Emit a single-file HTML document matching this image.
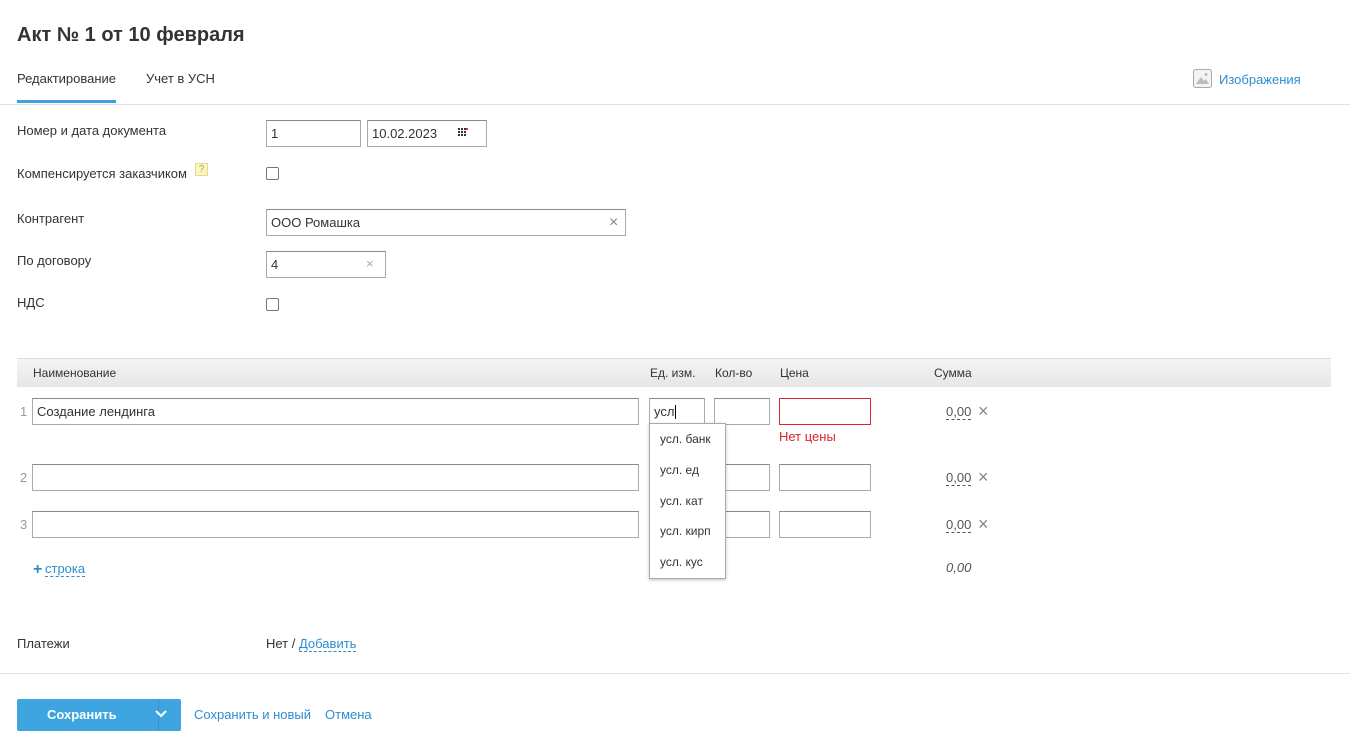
<!DOCTYPE html>
<html><head><meta charset="utf-8"><style>
*{box-sizing:border-box;margin:0;padding:0}
body{width:1350px;height:746px;background:#fff;font-family:"Liberation Sans",sans-serif;font-size:13px;color:#333;position:relative;overflow:hidden}
.a{position:absolute;white-space:nowrap}
.in{position:absolute;border:1px solid #a9a9a9;border-top-color:#8a8a8a;background:#fff;font-size:13px;padding:0 4px;display:flex;align-items:center}
.cb{position:absolute;width:13px;height:13px;border:1px solid #777;border-radius:2px;background:#fff}
.x{position:absolute;color:#888;font-size:16px;line-height:16px}
.sum{position:absolute;color:#555;border-bottom:1px dashed #555;line-height:14px;font-size:13px}
.lnk{color:#2d8ccf}
</style></head><body>
<div class="a" style="left:17px;top:24px;font-size:20px;font-weight:bold;color:#333">Акт № 1 от 10 февраля</div>
<div class="a" style="left:17px;top:71px;color:#333">Редактирование</div>
<div class="a" style="left:146px;top:71px;color:#333">Учет в УСН</div>
<div class="a" style="left:17px;top:100px;width:99px;height:3px;background:#3fa0dc"></div>
<div class="a" style="left:0;top:104px;width:1350px;height:1px;background:#e0e0e0"></div>
<svg class="a" style="left:1193px;top:69px" width="19" height="19" viewBox="0 0 19 19"><rect x="0.5" y="0.5" width="18" height="18" rx="2" fill="#f4f4f4" stroke="#aaa"/><path d="M3 15 L8 8 L11 12 L13 10 L16 15Z" fill="#bbb"/><circle cx="13" cy="5.5" r="1.5" fill="#bbb"/></svg>
<div class="a lnk" style="left:1219px;top:72px">Изображения</div>

<div class="a" style="left:17px;top:123px">Номер и дата документа</div>
<div class="in" style="left:266px;top:120px;width:95px;height:27px;color:#333">1</div>
<div class="in" style="left:367px;top:120px;width:120px;height:27px">10.02.2023</div>
<svg class="a" style="left:458px;top:128px" width="10" height="8"><g fill="#333"><rect x="0" y="0" width="2" height="2"/><rect x="3" y="0" width="2" height="2"/><rect x="6" y="0" width="2" height="2"/><rect x="0" y="3" width="2" height="2"/><rect x="3" y="3" width="2" height="2"/><rect x="6" y="3" width="2" height="2"/><rect x="0" y="6" width="2" height="2"/><rect x="3" y="6" width="2" height="2"/><rect x="6" y="6" width="2" height="2"/></g><rect x="8" y="0" width="2" height="2" fill="#e33"/></svg>
<div class="a" style="left:17px;top:166px">Компенсируется заказчиком</div>
<div class="a" style="left:195px;top:163px;width:13px;height:13px;background:#fbf5c4;border:1px solid #e5d98a;font-size:10px;color:#b9a640;text-align:center;line-height:11px">?</div>
<div class="cb" style="left:266px;top:167px"></div>
<div class="a" style="left:17px;top:211px">Контрагент</div>
<div class="in" style="left:266px;top:209px;width:360px;height:27px">ООО Ромашка</div>
<div class="x" style="left:609px;top:215px">×</div>
<div class="a" style="left:17px;top:253px">По договору</div>
<div class="in" style="left:266px;top:251px;width:120px;height:27px">4</div>
<div class="x" style="left:366px;top:256px;font-size:13px;color:#aaa">×</div>
<div class="a" style="left:17px;top:295px">НДС</div>
<div class="cb" style="left:266px;top:298px"></div>

<div class="a" style="left:17px;top:358px;width:1314px;height:29px;background:linear-gradient(#f4f4f4,#e6e6e6);border-top:1px solid #ddd"></div>
<div class="a" style="left:33px;top:366px;font-size:12px">Наименование</div>
<div class="a" style="left:650px;top:366px;font-size:12px">Ед. изм.</div>
<div class="a" style="left:715px;top:366px;font-size:12px">Кол-во</div>
<div class="a" style="left:780px;top:366px;font-size:12px">Цена</div>
<div class="a" style="left:934px;top:366px;font-size:12px">Сумма</div>

<div class="a" style="left:20px;top:404px;color:#999">1</div>
<div class="in" style="left:32px;top:398px;width:607px;height:27px">Создание лендинга</div>
<div class="in" style="left:649px;top:398px;width:56px;height:27px">усл<span style="border-left:1px solid #000;height:14px;margin-left:1px"></span></div>
<div class="in" style="left:714px;top:398px;width:56px;height:27px"></div>
<div class="in" style="left:779px;top:398px;width:92px;height:27px;border-color:#d9262c"></div>
<div class="a" style="left:779px;top:429px;color:#d9262c">Нет цены</div>
<div class="sum" style="left:946px;top:405px">0,00</div><div class="x" style="left:978px;top:403px;font-size:18px">×</div>

<div class="a" style="left:20px;top:470px;color:#999">2</div>
<div class="in" style="left:32px;top:464px;width:607px;height:27px"></div>
<div class="in" style="left:714px;top:464px;width:56px;height:27px"></div>
<div class="in" style="left:779px;top:464px;width:92px;height:27px"></div>
<div class="sum" style="left:946px;top:471px">0,00</div><div class="x" style="left:978px;top:469px;font-size:18px">×</div>

<div class="a" style="left:20px;top:517px;color:#999">3</div>
<div class="in" style="left:32px;top:511px;width:607px;height:27px"></div>
<div class="in" style="left:714px;top:511px;width:56px;height:27px"></div>
<div class="in" style="left:779px;top:511px;width:92px;height:27px"></div>
<div class="sum" style="left:946px;top:518px">0,00</div><div class="x" style="left:978px;top:516px;font-size:18px">×</div>

<div class="a" style="left:649px;top:423px;width:77px;height:156px;background:#fff;border:1px solid #aaa;box-shadow:0 1px 3px rgba(0,0,0,.25);font-size:12px">
<div class="a" style="left:10px;top:8px">усл. банк</div>
<div class="a" style="left:10px;top:39px">усл. ед</div>
<div class="a" style="left:10px;top:70px">усл. кат</div>
<div class="a" style="left:10px;top:100px">усл. кирп</div>
<div class="a" style="left:10px;top:131px">усл. кус</div>
</div>

<div class="a lnk" style="left:33px;top:561px;font-size:16px;font-weight:bold">+</div>
<div class="a lnk" style="left:45px;top:562px;border-bottom:1px dashed #2d8ccf;line-height:14px">строка</div>
<div class="a" style="left:946px;top:560px;font-style:italic;color:#555">0,00</div>

<div class="a" style="left:17px;top:636px">Платежи</div>
<div class="a" style="left:266px;top:636px">Нет / <span class="lnk" style="border-bottom:1px dashed #2d8ccf">Добавить</span></div>
<div class="a" style="left:0;top:673px;width:1350px;height:1px;background:#e0e0e0"></div>

<div class="a" style="left:17px;top:699px;width:164px;height:32px;background:#3fa5e0;border-radius:2px"></div>
<div class="a" style="left:158px;top:699px;width:1px;height:32px;background:#3694cc"></div>
<div class="a" style="left:47px;top:707px;color:#fff;font-weight:bold">Сохранить</div>
<svg class="a" style="left:155px;top:710px" width="12" height="8"><path d="M1 1 L6 6 L11 1" stroke="#fff" stroke-width="2" fill="none"/></svg>
<div class="a lnk" style="left:194px;top:707px">Сохранить и новый</div>
<div class="a lnk" style="left:325px;top:707px">Отмена</div>
</body></html>
